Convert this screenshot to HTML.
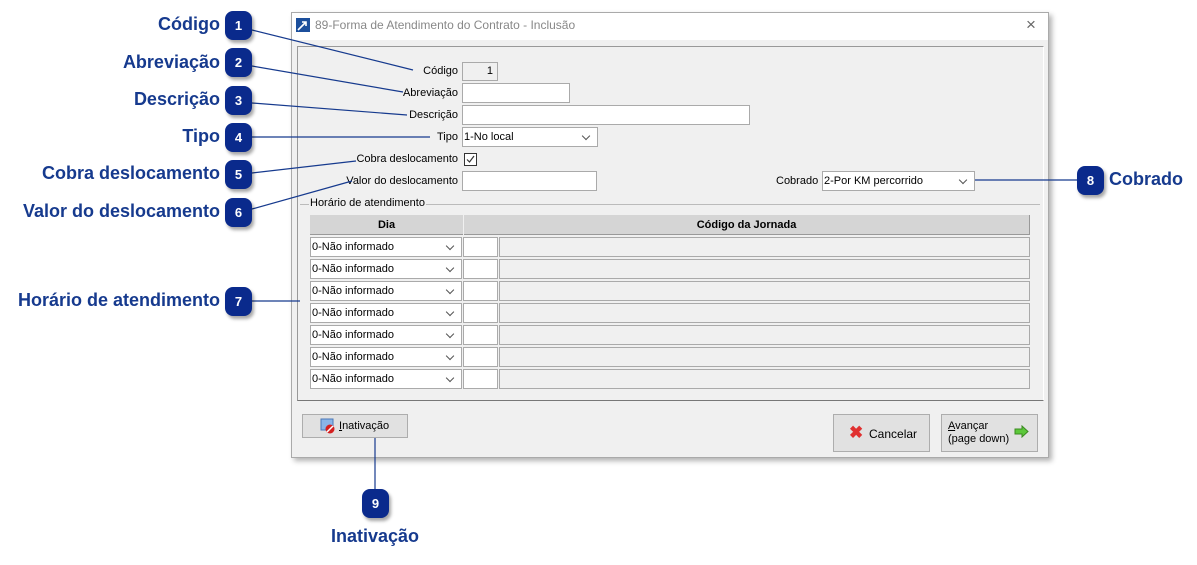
<!DOCTYPE html>
<html><head><meta charset="utf-8"><style>
*{box-sizing:border-box;margin:0;padding:0}
body{width:1197px;height:565px;background:#fff;position:relative;overflow:hidden;font-family:"Liberation Sans",sans-serif;font-size:11px;color:#000}
.a{position:absolute}
.lbl{position:absolute;font-weight:bold;font-size:18px;color:#163a8e;text-align:right;white-space:nowrap}
.b{position:absolute;width:27px;height:29px;background:#0a2a8c;border-radius:8px;color:#fff;font-weight:bold;font-size:13px;text-align:center;line-height:29px;box-shadow:2px 3px 3px rgba(0,0,0,.35);z-index:3}
.f{position:absolute;background:#fff;border:1px solid #aaa;height:20px}
.t{position:absolute;font-size:11px;white-space:nowrap}
.sel{position:absolute;background:#fff;border:1px solid #aaa;height:20px;padding-left:1px;line-height:18px;font-size:11px}
.sel:after{content:"";position:absolute;right:8px;top:5px;width:5px;height:5px;border-right:1px solid #555;border-bottom:1px solid #555;transform:rotate(45deg)}
.btn{position:absolute;background:#e1e1e1;border:1px solid #adadad;font-size:11px}
</style></head><body>
<div class="lbl" style="right:977px;top:14px">Código</div>
<div class="lbl" style="right:977px;top:52px">Abreviação</div>
<div class="lbl" style="right:977px;top:89px">Descrição</div>
<div class="lbl" style="right:977px;top:126px">Tipo</div>
<div class="lbl" style="right:977px;top:163px">Cobra deslocamento</div>
<div class="lbl" style="right:977px;top:201px">Valor do deslocamento</div>
<div class="lbl" style="right:977px;top:290px">Horário de atendimento</div>
<div class="lbl" style="left:1109px;top:169px">Cobrado</div>
<div class="lbl" style="left:331px;top:526px">Inativação</div>
<div class="b" style="left:225px;top:11px">1</div>
<div class="b" style="left:225px;top:48px">2</div>
<div class="b" style="left:225px;top:86px">3</div>
<div class="b" style="left:225px;top:123px">4</div>
<div class="b" style="left:225px;top:160px">5</div>
<div class="b" style="left:225px;top:198px">6</div>
<div class="b" style="left:225px;top:287px">7</div>
<div class="b" style="left:1077px;top:166px">8</div>
<div class="b" style="left:362px;top:489px">9</div>

<div class="a" style="left:291px;top:12px;width:758px;height:446px;background:#f0f0f0;border:1px solid #aaa;box-shadow:3px 3px 5px rgba(0,0,0,.3)">
<div class="a" style="left:0;top:0;width:756px;height:27px;background:#fff"></div>
</div>
<div class="a" style="left:296px;top:18px;width:14px;height:14px;background:#1c4f9c"></div>
<svg class="a" style="left:296px;top:18px" width="14" height="14"><path d="M2 12 L10 4 M6 4h4v4" stroke="#fff" stroke-width="1.6" fill="none"/></svg>
<div class="t" style="left:315px;top:18px;font-size:12px;color:#888">89-Forma de Atendimento do Contrato - Inclusão</div>
<div class="t" style="left:1026px;top:15px;font-size:17px;color:#666">×</div>
<div class="a" style="left:297px;top:46px;width:747px;height:355px;border:1px solid #999;border-right-color:#fff;border-bottom-color:#777"></div>

<div class="t" style="right:739px;top:65px">Código</div>
<div class="f" style="left:462px;top:62px;width:36px;height:19px;background:#f0f0f0;text-align:right;padding-right:4px;line-height:17px">1</div>
<div class="t" style="right:739px;top:87px">Abreviação</div>
<div class="f" style="left:462px;top:83px;width:108px"></div>
<div class="t" style="right:739px;top:109px">Descrição</div>
<div class="f" style="left:462px;top:105px;width:288px"></div>
<div class="t" style="right:739px;top:131px">Tipo</div>
<div class="sel" style="left:462px;top:127px;width:136px">1-No local</div>
<div class="t" style="right:739px;top:153px">Cobra deslocamento</div>
<div class="a" style="left:464px;top:153px;width:13px;height:13px;border:1px solid #333;background:#fff"></div>
<svg class="a" style="left:464px;top:153px" width="13" height="13"><path d="M3 6.5 L5.5 9 L10 3" stroke="#333" stroke-width="1.2" fill="none"/></svg>
<div class="t" style="right:739px;top:175px">Valor do deslocamento</div>
<div class="f" style="left:462px;top:171px;width:135px"></div>
<div class="t" style="left:776px;top:175px">Cobrado</div>
<div class="sel" style="left:822px;top:171px;width:153px">2-Por KM percorrido</div>

<div class="a" style="left:300px;top:204px;width:740px;height:1px;background:#bbb"></div>
<div class="t" style="left:309px;top:197px;background:#f0f0f0;padding:0 1px">Horário de atendimento</div>
<div class="a" style="left:310px;top:215px;width:153px;height:20px;background:#d5d5d5;border-bottom:1px solid #999;font-weight:bold;text-align:center;line-height:20px">Dia</div>
<div class="a" style="left:464px;top:215px;width:566px;height:20px;background:#d5d5d5;border-bottom:1px solid #999;border-right:1px solid #999;font-weight:bold;text-align:center;line-height:20px">Código da Jornada</div>

<div class="sel" style="left:310px;top:237px;width:152px">0-Não informado</div><div class="f" style="left:463px;top:237px;width:35px"></div><div class="f" style="left:499px;top:237px;width:531px;background:#f0f0f0"></div>
<div class="sel" style="left:310px;top:259px;width:152px">0-Não informado</div><div class="f" style="left:463px;top:259px;width:35px"></div><div class="f" style="left:499px;top:259px;width:531px;background:#f0f0f0"></div>
<div class="sel" style="left:310px;top:281px;width:152px">0-Não informado</div><div class="f" style="left:463px;top:281px;width:35px"></div><div class="f" style="left:499px;top:281px;width:531px;background:#f0f0f0"></div>
<div class="sel" style="left:310px;top:303px;width:152px">0-Não informado</div><div class="f" style="left:463px;top:303px;width:35px"></div><div class="f" style="left:499px;top:303px;width:531px;background:#f0f0f0"></div>
<div class="sel" style="left:310px;top:325px;width:152px">0-Não informado</div><div class="f" style="left:463px;top:325px;width:35px"></div><div class="f" style="left:499px;top:325px;width:531px;background:#f0f0f0"></div>
<div class="sel" style="left:310px;top:347px;width:152px">0-Não informado</div><div class="f" style="left:463px;top:347px;width:35px"></div><div class="f" style="left:499px;top:347px;width:531px;background:#f0f0f0"></div>
<div class="sel" style="left:310px;top:369px;width:152px">0-Não informado</div><div class="f" style="left:463px;top:369px;width:35px"></div><div class="f" style="left:499px;top:369px;width:531px;background:#f0f0f0"></div>

<div class="btn" style="left:302px;top:414px;width:106px;height:24px"></div>
<svg class="a" style="left:320px;top:418px" width="16" height="16"><rect x="1" y="1" width="12" height="11" fill="#8ab4e8" stroke="#4a78b8"/><circle cx="10" cy="11" r="4.5" fill="#d42020"/><path d="M7 14 L13 8" stroke="#fff" stroke-width="1.5"/></svg>
<div class="t" style="left:339px;top:420px"><u>I</u>nativação</div>
<div class="btn" style="left:833px;top:414px;width:97px;height:38px"></div>
<div class="t" style="left:849px;top:423px;font-size:17px;color:#e03030;font-weight:bold">✖</div>
<div class="t" style="left:869px;top:427px;font-size:12px">Cancelar</div>
<div class="btn" style="left:941px;top:414px;width:97px;height:38px"></div>
<div class="t" style="left:948px;top:420px;line-height:13px"><u>A</u>vançar<br>(page down)</div>
<svg class="a" style="left:1014px;top:425px" width="15" height="13"><path d="M1 4h7V1l6 5.5-6 5.5V9H1z" fill="#5cc83a" stroke="#3a8a20"/></svg>

<svg class="a" style="left:0;top:0;z-index:2" width="1197" height="565">
<g stroke="#163a8e" stroke-width="1.2" fill="none">
<line x1="252" y1="30" x2="413" y2="70"/>
<line x1="252" y1="66" x2="403" y2="92"/>
<line x1="252" y1="103" x2="407" y2="115"/>
<line x1="252" y1="137" x2="430" y2="137"/>
<line x1="252" y1="173" x2="356" y2="161"/>
<line x1="252" y1="209" x2="352" y2="181"/>
<line x1="252" y1="301" x2="300" y2="301"/>
<line x1="975" y1="180" x2="1078" y2="180"/>
<line x1="375" y1="438" x2="375" y2="490"/>
</g></svg>
</body></html>
